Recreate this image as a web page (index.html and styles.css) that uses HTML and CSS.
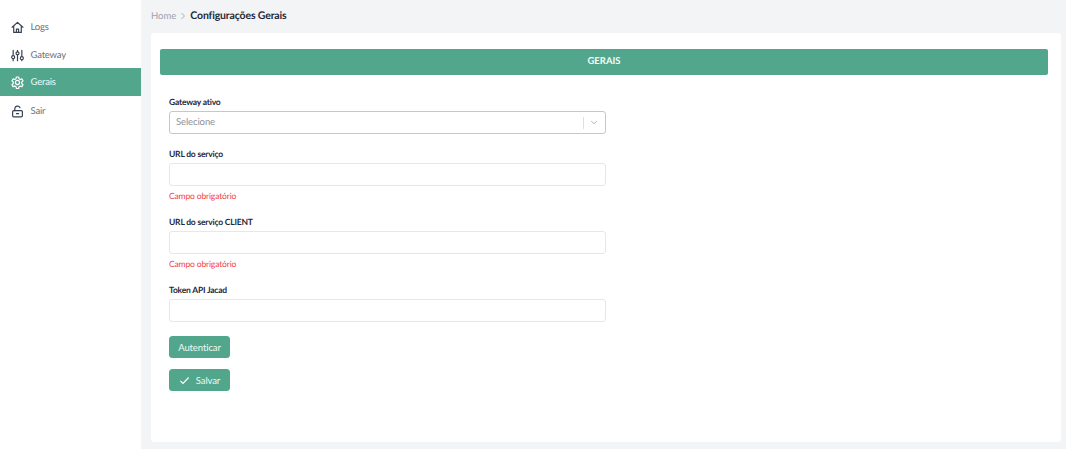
FILE: index.html
```html
<!DOCTYPE html>
<html lang="pt-BR">
<head>
<meta charset="utf-8">
<title>Configurações Gerais</title>
<link rel="stylesheet" href="styles.css">
</head>
<body>
<div class="app">
  <aside class="sidebar">
    <nav class="menu">
      <a class="item">
        <svg class="icon" viewBox="0 0 24 24"><path d="M2 11.500 12 2.500l10 9M5 9v12h14V9M10 21v-6h4v6"/></svg>
        <span>Logs</span>
      </a>
      <a class="item">
        <svg class="icon" viewBox="0 0 24 24"><path d="M4 2.500v9M4 18v3.500M12 2.500v2M12 11v10.500M20 2.500v11M20 20v1.500"/><circle cx="4" cy="15" r="2.800"/><circle cx="12" cy="8" r="2.800"/><circle cx="20" cy="17" r="2.800"/></svg>
        <span>Gateway</span>
      </a>
      <a class="item active">
        <svg class="icon" viewBox="0 0 24 24"><circle cx="12" cy="12" r="3.800"/><path d="M10 1.800h4l.7 3.200 2.400 1.400 3.100-1 2 3.500-2.400 2.200v2.800l2.400 2.200-2 3.500-3.100-1-2.400 1.400-.7 3.200h-4l-.7-3.200-2.400-1.400-3.100 1-2-3.500 2.400-2.200v-2.800L1.800 8.900l2-3.500 3.100 1 2.400-1.400z"/></svg>
        <span>Gerais</span>
      </a>
      <a class="item">
        <svg class="icon" viewBox="0 0 24 24"><rect x="3" y="10.500" width="18" height="11.500" rx="2"/><path d="M7 10.500V7a5 5 0 0 1 9.600-2M10 16h4"/></svg>
        <span>Sair</span>
      </a>
    </nav>
  </aside>
  <main class="main">
    <div class="breadcrumb">
      <span class="crumb">Home</span>
      <svg class="crumb-sep" viewBox="0 0 8 10"><path d="M2 1l4 4-4 4"/></svg>
      <span class="crumb-current">Configurações Gerais</span>
    </div>
    <section class="card">
      <h1 class="banner">GERAIS</h1>
      <form class="form">
        <div class="field">
          <label class="label">Gateway ativo</label>
          <div class="select">
            <span class="placeholder">Selecione</span>
            <span class="select-divider"></span>
            <svg class="select-arrow" viewBox="0 0 12 8"><path d="M1.500 1.500 6 6l4.500-4.500"/></svg>
          </div>
        </div>
        <div class="field">
          <label class="label">URL do serviço</label>
          <input class="input" type="text">
          <p class="error">Campo obrigatório</p>
        </div>
        <div class="field">
          <label class="label">URL do serviço CLIENT</label>
          <input class="input" type="text">
          <p class="error">Campo obrigatório</p>
        </div>
        <div class="field">
          <label class="label">Token API Jacad</label>
          <input class="input" type="text">
        </div>
        <button class="btn auth" type="button">Autenticar</button>
        <button class="btn save" type="button">
          <svg class="check" viewBox="0 0 14 12"><path d="M1.500 6.500 5 10l7.500-8"/></svg>
          Salvar
        </button>
      </form>
    </section>
  </main>
</div>
</body>
</html>
```
FILE: styles.css
```css
* { box-sizing: border-box; }
html, body { margin: 0; height: 100%; }
body {
  font-family: Lato, "Open Sans", sans-serif;
  text-rendering: geometricPrecision;
  background: #f3f4f6;
  color: #1f2937;
  overflow: hidden;
}
.app { display: flex; height: 449px; }
.sidebar { width: 141px; flex: none; background: #fff; padding-top: 13px; }
.menu { display: flex; flex-direction: column; }
.item {
  height: 28px;
  display: flex;
  align-items: center;
  gap: 7px;
  padding-left: 10.500px;
  font-size: 9.500px;
  letter-spacing: -0.2px;
  color: #6b7280;
}
.item.active { background: #52a68c; color: #eefaf5; margin: -1px 0 1px; }
.icon {
  width: 13px;
  height: 13px;
  fill: none;
  stroke: #374151;
  stroke-width: 2.200;
  stroke-linecap: round;
  stroke-linejoin: round;
}
.item.active .icon { stroke: #fff; }
.main { flex: 1; padding: 0 5px 7px 10px; display: flex; flex-direction: column; min-width: 0; }
.breadcrumb { height: 32px; margin-bottom: 1px; display: flex; align-items: center; }
.crumb { font-size: 9.500px; color: #9ca3af; }
.crumb-sep { width: 6px; height: 8px; margin: 0 4px; fill: none; stroke: #9ca3af; stroke-width: 1.200; }
.crumb-current { font-size: 10.500px; letter-spacing: -0.15px; font-weight: 700; color: #1f2937; }
.card { flex: 1; background: #fff; border-radius: 3px; padding: 16px 13px 0 9px; }
.banner {
  margin: 0;
  height: 26px;
  line-height: 26px;
  background: #52a68c;
  border-radius: 2px;
  color: #f5fffb;
  text-align: center;
  font-size: 9.500px;
  font-weight: 700;
}
.form { width: 437px; margin: 20px 0 0 9px; display: flex; flex-direction: column; align-items: flex-start; }
.field { width: 100%; margin-bottom: 13px; }
.label { display: block; font-size: 8.500px; letter-spacing: -0.2px; font-weight: 700; line-height: 14px; color: #1f2937; margin-bottom: 2px; }
.input, .select {
  display: flex;
  align-items: center;
  width: 100%;
  height: 23px;
  background: #fff;
  border: 1px solid #e5e7eb;
  border-radius: 3px;
  margin: 0;
  padding: 0 6px;
  outline: none;
}
.select { border-color: #c4c8ce; padding-right: 7px; }
.placeholder { flex: 1; font-size: 9.500px; letter-spacing: -0.1px; line-height: 14px; padding-top: 1px; color: #8b929c; }
.select-divider { width: 1px; height: 12px; background: #dcdfe3; margin-right: 6px; }
.select-arrow { width: 8px; height: 5px; fill: none; stroke: #9ca3af; stroke-width: 1.300; }
.error { margin: 5px 0 0; font-size: 8.500px; letter-spacing: -0.15px; line-height: 11px; color: #ef4444; }
.btn {
  display: flex;
  align-items: center;
  justify-content: center;
  height: 22px;
  border: 0;
  border-radius: 3.500px;
  background: #52a68c;
  color: #eefaf5;
  font-family: inherit;
  font-size: 9.500px;
  letter-spacing: -0.1px;
}
.auth { width: 61px; margin-top: 1px; }
.save { width: 61px; margin-top: 11px; gap: 6px; }
.check { width: 11px; height: 9px; fill: none; stroke: #fff; stroke-width: 1.500; }
```
